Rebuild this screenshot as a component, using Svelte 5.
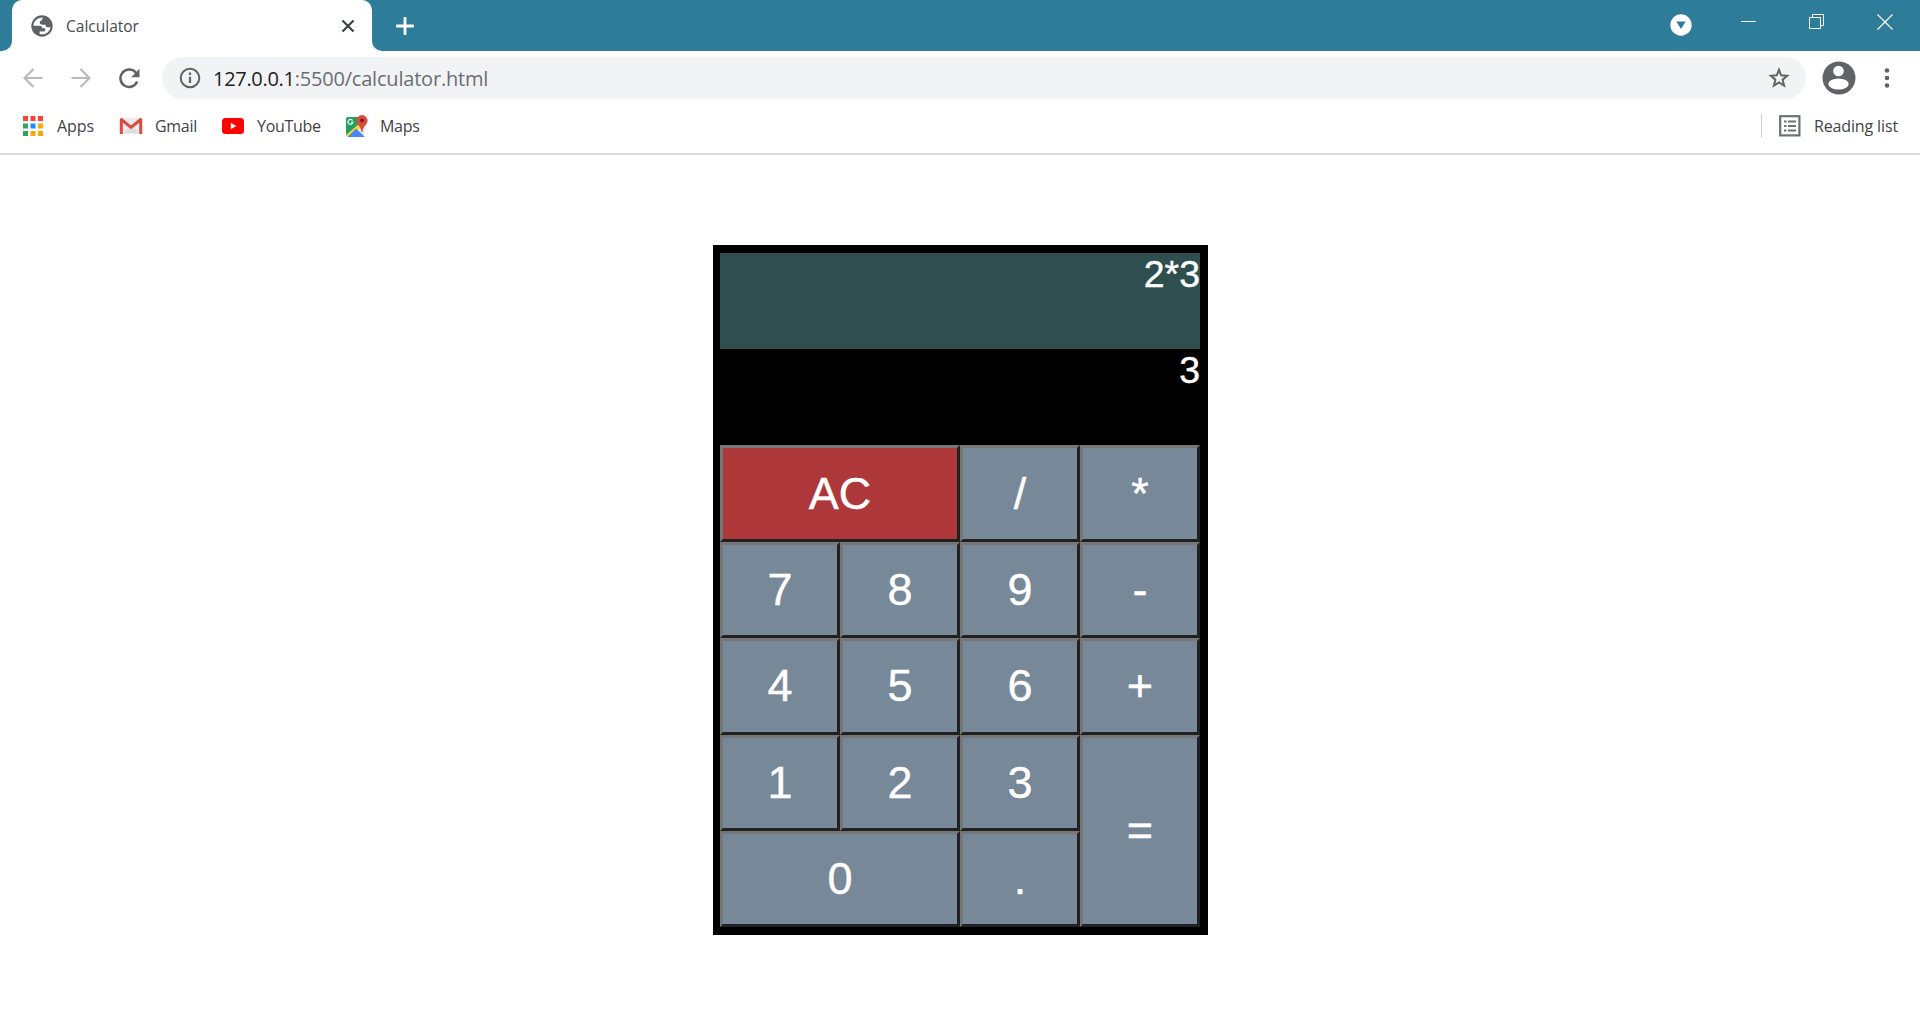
<script>
  const keys = [
    { label: 'AC', kind: 'wide clear' },
    { label: '/' },
    { label: '*' },
    { label: '7' },
    { label: '8' },
    { label: '9' },
    { label: '-' },
    { label: '4', kind: 'raised' },
    { label: '5', kind: 'raised' },
    { label: '6', kind: 'raised' },
    { label: '+', kind: 'raised' },
    { label: '1' },
    { label: '2' },
    { label: '3' },
    { label: '=', kind: 'tall raised' },
    { label: '0', kind: 'wide' },
    { label: '.' }
  ];
</script>

<div class="window">
  <header class="titlebar">
    <div class="tab">
      <svg class="flare left" width="10" height="10"><path d="M10 0V10H0A10 10 0 0 0 10 0Z" fill="#fff" /></svg>
      <svg class="globe" width="22" height="22" viewBox="0 0 22 22">
        <circle cx="11" cy="11" r="10.700" fill="#5f6368" />
        <path d="M12 2.600C6.500 2.300 2.600 6.300 2.500 10.800H8.600C10.400 10.800 11.300 11.800 11.300 13.200H14.200V15.200C14.200 16.200 13.400 16.600 12.400 16.600H8.600V19C14.800 20.500 18.900 16.400 19.400 12.200H16.400C14.800 12.200 14.600 11 14.600 9.700H11.400C9.800 9.700 8.800 8.900 8.800 7.500C8.800 6 9.700 5.500 11 5.500C11 4.300 11.300 3.500 12.100 2.800Z" fill="#fff" />
      </svg>
      <span class="tab-title">Calculator</span>
      <svg class="tab-close" width="14" height="14" viewBox="0 0 14 14"><path d="M1.500 1.500L12.500 12.500M12.500 1.500L1.500 12.500" stroke="#3c4043" stroke-width="2.200" /></svg>
      <svg class="flare right" width="10" height="10"><path d="M0 0V10H10A10 10 0 0 1 0 0Z" fill="#fff" /></svg>
    </div>
    <svg class="plus" width="18" height="18" viewBox="0 0 18 18"><path d="M9 1V17M1 9H17" stroke="#fff" stroke-width="2.800" stroke-linecap="round" /></svg>
    <div class="controls">
      <svg width="22" height="22" viewBox="0 0 22 22" class="tab-search"><circle cx="11" cy="11" r="10.700" fill="#fff" /><path d="M6.300 7.600H15.700L11 15Z" fill="#2d7c9a" /></svg>
      <svg width="15" height="15" class="min"><path d="M0 7.500H15" stroke="#fff" /></svg>
      <svg width="15" height="15" class="restore"><path d="M.5 3.500H11.500V14.500H.5ZM3.500 3.500V.5H14.500V11.500H11.500" fill="none" stroke="#fff" /></svg>
      <svg width="16" height="16" class="close"><path d="M.5 .5L15.500 15.500M15.500 .5L.5 15.500" stroke="#fff" stroke-width="1.200" /></svg>
    </div>
  </header>

  <div class="toolbar">
    <svg class="back" width="20" height="20" viewBox="0 0 20 20"><path d="M19.500 10H2M10.500 1L1.500 10L10.500 19" fill="none" stroke="#bababc" stroke-width="2.200" /></svg>
    <svg class="forward" width="20" height="20" viewBox="0 0 20 20"><path d="M.5 10H18M9.500 1L18.500 10L9.500 19" fill="none" stroke="#bababc" stroke-width="2.200" /></svg>
    <svg class="reload" width="21" height="21" viewBox="0 0 21 21"><path d="M18.200 13.600A8.700 8.700 0 1 1 16.600 4.400L18 6" fill="none" stroke="#5f6368" stroke-width="2.500" /><path d="M20.500 .8V9.200H12.200Z" fill="#5f6368" /></svg>
    <div class="omnibox">
      <svg width="22" height="22" viewBox="0 0 22 22"><circle cx="11" cy="11" r="9.300" fill="none" stroke="#5f6368" stroke-width="2" /><path d="M11 5.600V8M11 9.800V16" stroke="#5f6368" stroke-width="2.200" /></svg>
      <span class="url"><span class="host">127.0.0.1</span>:5500/calculator.html</span>
      <svg class="star" width="22" height="22" viewBox="0 0 22 22"><path d="M11 2.800L13.200 8.300L19.200 8.800L14.600 12.700L16.100 18.600L11 15.400L5.900 18.600L7.400 12.700L2.800 8.800L8.800 8.300Z" fill="none" stroke="#5f6368" stroke-width="2" /></svg>
    </div>
    <svg class="avatar" width="34" height="34" viewBox="0 0 34 34"><circle cx="17" cy="17" r="16.500" fill="#5f6368" /><circle cx="16.500" cy="10" r="5.300" fill="#fff" /><ellipse cx="16.500" cy="23" rx="10.200" ry="5.500" fill="#fff" /></svg>
    <svg class="menu" width="6" height="20" viewBox="0 0 6 20"><g fill="#5f6368"><circle cx="3" cy="2.500" r="2.300" /><circle cx="3" cy="10" r="2.300" /><circle cx="3" cy="17.500" r="2.300" /></g></svg>
  </div>

  <nav class="bookmarks">
    <svg class="apps" width="20" height="20" viewBox="0 0 20 20">
      <path d="M0 0h5v5H0zM7.500 0h5v5h-5zM15 0h5v5h-5z" fill="#f8433a" />
      <path d="M0 7.500h5v5H0zM0 15h5v5H0z" fill="#2da458" />
      <path d="M7.500 7.500h5v5h-5z" fill="#1a8cff" />
      <path d="M15 7.500h5v5h-5zM7.500 15h5v5h-5zM15 15h5v5h-5z" fill="#f9a80c" />
    </svg>
    <span class="t-apps">Apps</span>
    <svg class="gmail" width="24" height="18" viewBox="0 0 24 18">
      <path d="M2 1H22V17H2Z" fill="#eceaea" /><path d="M4 16L12 9L20 16Z" fill="#dedcdc" />
      <path d="M2.300 17V2.500L12 10.300L21.700 2.500V17" fill="none" stroke="#dc4b40" stroke-width="3" stroke-linejoin="round" />
    </svg>
    <span class="t-gmail">Gmail</span>
    <svg class="youtube" width="22" height="16" viewBox="0 0 22 16"><rect width="22" height="16" rx="3.500" fill="#f00" /><path d="M8.800 4.800V11.200L14.300 8Z" fill="#fff" /></svg>
    <span class="t-youtube">YouTube</span>
    <svg class="maps" width="23" height="23" viewBox="0 0 23 23">
      <path d="M3 2H16L19 20Q19 22 17 22H3Q1 22 1 20V4Q1 2 3 2Z" fill="#e8eaed" />
      <path d="M3 2H16V8L2 21Q1 21 1 19V4Q1 2 3 2Z" fill="#1fa261" />
      <path d="M15 8L18 11L5 22H3L1 20Z" fill="#fdd835" />
      <path d="M11 13.500L20 22H2.500Z" fill="#4a89f3" />
      <path d="M13 11L20 18V20Z" fill="#e3e5e8" />
      <path d="M17 0A5.600 5.600 0 0 1 22.600 5.600C22.600 10 18 11 17.500 17H16.500C16 11 11.400 10 11.400 5.600A5.600 5.600 0 0 1 17 0Z" fill="#dc4b40" />
      <circle cx="17" cy="5.600" r="2" fill="#7b231e" />
      <path d="M7.600 5.500A2.500 2.500 0 1 0 7.900 7.400H6" fill="none" stroke="#fff" stroke-width="1.200" />
    </svg>
    <span class="t-maps">Maps</span>
    <div class="reading">
      <svg width="22" height="22" viewBox="0 0 22 22"><rect x="1.200" y="1.200" width="19.200" height="19.200" fill="none" stroke="#6e7175" stroke-width="2.200" /><path d="M5 6.500h2.500M5 11h2.500M5 15.500h2.500M9 6.500h8M9 11h8M9 15.500h8" stroke="#6e7175" stroke-width="2.200" /></svg>
      <span class="t-reading">Reading list</span>
    </div>
  </nav>

  <main>
    <section class="calculator">
      <div class="display previous">2*3</div>
      <div class="display current">3</div>
      {#each keys as key}
        <button class={key.kind ?? ''}>{key.label}</button>
      {/each}
    </section>
  </main>
</div>

<style>
  :global(body) { margin: 0; background: #fff; }
  .window { width: 1920px; height: 1030px; overflow: hidden; display: flex; flex-direction: column; font-family: "Open Sans", "Noto Sans", sans-serif; }
  svg { display: block; flex: none; }
  span { white-space: nowrap; }

  .titlebar { height: 51px; flex: none; box-sizing: border-box; background: #2d7c9a; display: flex; padding-left: 12px; }
  .tab { position: relative; width: 360px; height: 51px; box-sizing: border-box; padding: 0 17px 0 19px; background: #fff; border-radius: 10px 10px 0 0; display: flex; align-items: center; }
  .flare { position: absolute; bottom: 0; }
  .flare.left { left: -10px; }
  .flare.right { right: -10px; }
  .tab-title { margin-left: 13px; font-size: 15.500px; letter-spacing: 0; color: #45494d; }
  .tab-close { margin-left: auto; }
  .plus { margin: 17px 0 0 24px; }
  .controls { margin-left: auto; display: flex; padding-right: 27px; }
  .tab-search { margin-top: 14px; }
  .min { margin: 14px 0 0 49px; }
  .restore { margin: 14px 0 0 53px; }
  .close { margin: 14px 0 0 53px; }

  .toolbar { height: 54px; flex: none; display: flex; align-items: center; padding-left: 23px; }
  .forward { margin-left: 28px; }
  .reload { margin-left: 28px; }
  .omnibox { margin-left: 22px; width: 1644px; height: 42px; box-sizing: border-box; border-radius: 21px; background: #f1f3f4; display: flex; align-items: center; padding: 0 16px 0 17px; }
  .url { margin-left: 12px; font-size: 20px; letter-spacing: -.2px; color: #6b6e72; }
  .host { color: #202124; letter-spacing: -.3px; }
  .star { margin-left: auto; }
  .avatar { margin-left: 16px; }
  .menu { margin-left: 28px; }

  .bookmarks { height: 50px; flex: none; box-sizing: border-box; border-bottom: 2px solid #dadce0; display: flex; align-items: center; padding: 0 22px 6px 23px; font-size: 16px; letter-spacing: -.3px; color: #3f4347; }
  .t-apps { margin-left: 14px; width: 48px; letter-spacing: -.1px; }
  .gmail { margin-left: 14px; }
  .t-gmail { margin-left: 12px; width: 67px; }
  .t-youtube { margin-left: 13px; width: 76px; }
  .maps { margin-left: 12px; }
  .t-maps { margin-left: 12px; }
  .reading { margin-left: auto; height: 24px; display: flex; align-items: center; padding-left: 17px; border-left: 1px solid #cfd1d4; }
  .t-reading { margin-left: 13px; letter-spacing: -.13px; }

  main { flex: 1; display: flex; justify-content: center; align-items: flex-start; padding: 90px 0 0 1px; box-sizing: border-box; }
  .calculator { box-sizing: border-box; width: 495px; height: 690px; padding: 8px 8px 8px 7px; background: #000; display: grid; grid-template-columns: repeat(4, 120px); grid-template-rows: 96px 96px 97px 96px 97px 96px 96px; font-family: "Liberation Sans", Arial, sans-serif; color: #fff; -webkit-text-stroke: .4px #fff; }
  .display { grid-column: 1 / -1; text-align: right; font-size: 37.500px; line-height: 42px; }
  .previous { background: #2f4f4f; }
  button { margin: 0; padding: 0; font: 45px "Liberation Sans", Arial, sans-serif; color: #fff; -webkit-text-stroke: .4px #fff; background: #778899; border: 3px solid; border-color: #767676 #212121 #212121 #767676; border-radius: 0; }
  .wide { grid-column: span 2; }
  .tall { grid-row: span 2; }
  .raised { padding-bottom: 2px; }
  .clear { background: #ad3739; }
</style>
